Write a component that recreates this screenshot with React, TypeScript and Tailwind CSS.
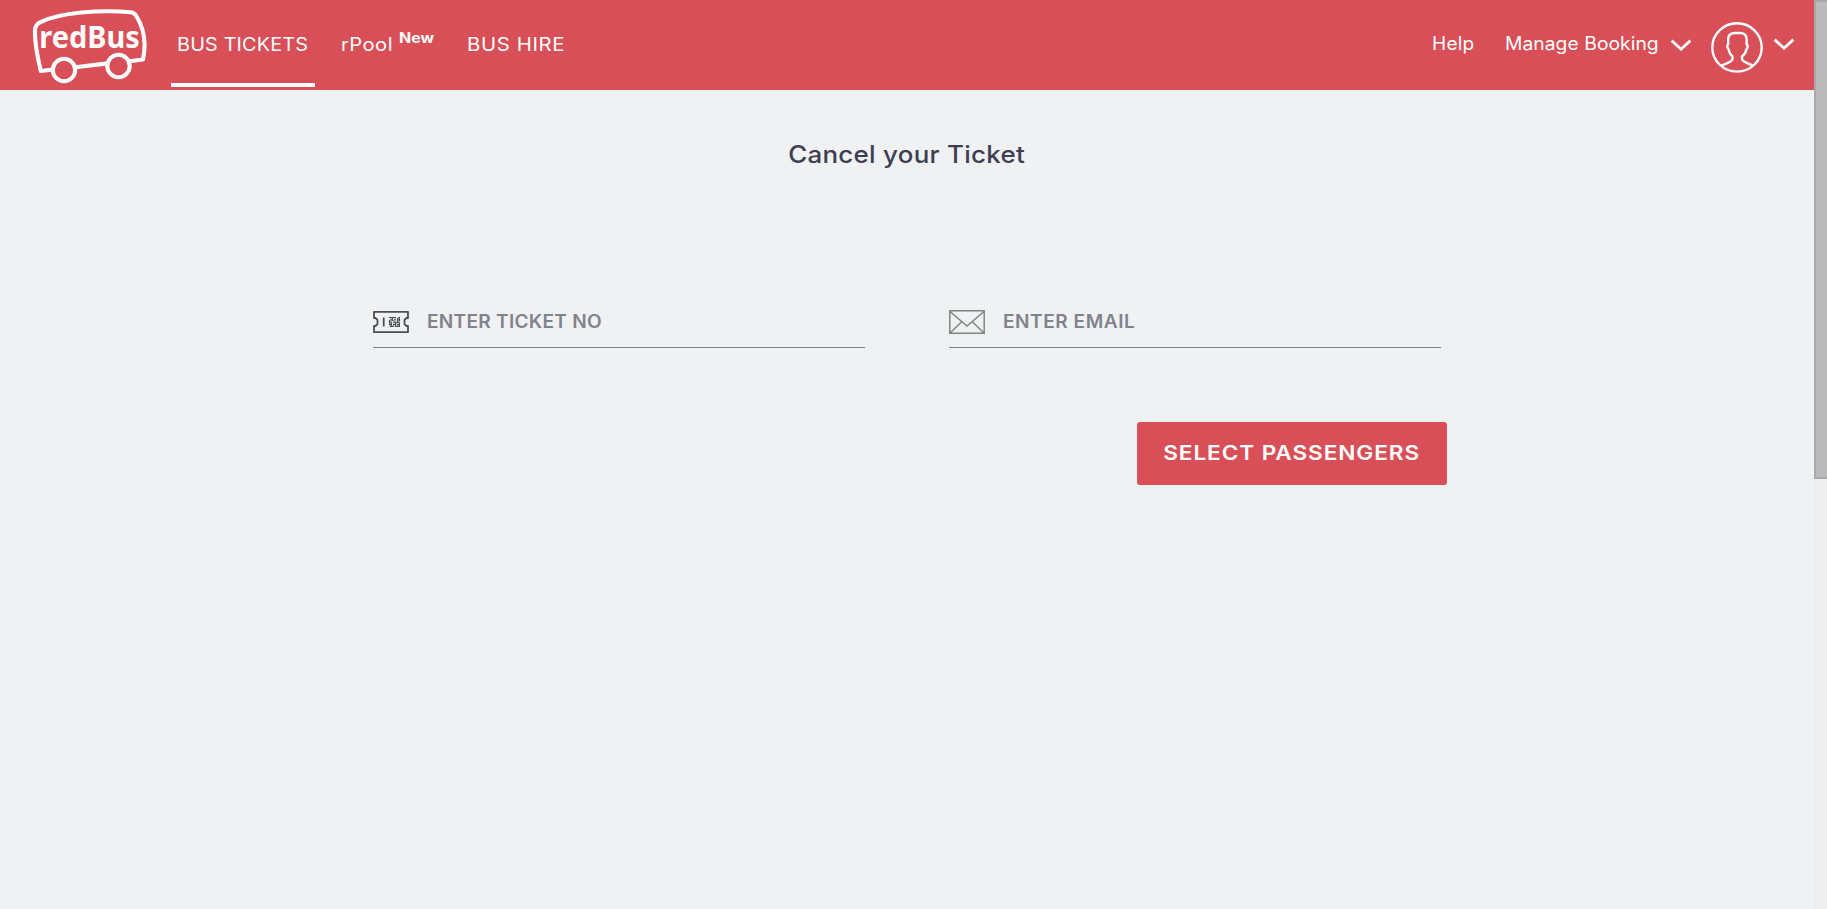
import type { ReactNode } from 'react';

function Logo() {
  return (
    <svg width="120" height="80" viewBox="30 5 120 80" fill="none" stroke="white" strokeWidth="4.1" strokeLinejoin="round" role="img" aria-label="redBus">
      <path d="M53 69.5 40.8 71C37.5 57 34.5 42 35 30Q35.2 25 40 22.3C60 12.5 100 9.5 131 12.3Q134 12.6 136 15.5C144 28 146.5 43 143 59.5L129.5 61.3M75 67.2 108 63.4" />
      <circle cx="64" cy="70" r="11.2" />
      <circle cx="118.5" cy="66" r="11.2" />
      <text x="39.3" y="47.8" textLength="100.5" lengthAdjust="spacingAndGlyphs" fill="white" stroke="none" fontSize="30" fontWeight="700" fontFamily="Noto Sans, sans-serif">redBus</text>
    </svg>
  );
}

function Chevron() {
  return (
    <svg width="22" height="14" viewBox="0 0 22 14" fill="none" stroke="white" strokeWidth="2.8" className="shrink-0">
      <path d="M1.6 1.6 11 10.2 20.4 1.6" />
    </svg>
  );
}

function UserIcon() {
  return (
    <svg width="52" height="52" viewBox="0 0 52 52" fill="none" stroke="white" strokeWidth="2.4" strokeLinejoin="round" className="shrink-0">
      <ellipse cx="26" cy="26.4" rx="24.7" ry="24.2" />
      <path d="M10.5 44.5C15 42.3 21.5 41 21.5 38V35.5C19.3 33.5 18 31 17.6 28.5L16.4 26.5V24.5L17.2 23V18C17.4 13.8 20.5 12 24 12H29C32.5 12 35.4 14 35.6 18V23L36.6 24.5V26.5L35.4 28.5C34.8 31.5 33.3 33.8 31 35.5V38C31 41 37.5 42 41.5 44.5" />
    </svg>
  );
}

function TicketIcon() {
  return (
    <svg width="36" height="24" viewBox="0 0 36 24" fill="none" stroke="#504c58" className="shrink-0">
      <path strokeWidth="1.8" strokeLinejoin="round" d="M1 1.8H35V8H33.5L31.5 10V14L33.5 16H35V22.2H1V16H2.5L4.5 14V10L2.5 8H1Z" />
      <path strokeWidth="1.8" d="M10.7 7.5V16.5" />
      <path strokeWidth="1.1" d="M16 7.5h3m1 0h3m2 0h2M17 9.2h2m2 0h2m1 0h3M16 11h3m1 0h3m2 0h2M17 12.8h2m1 0h2m1 0h4M16 14.6h2m2 0h3m1 0h2M17 16.4h4m2 0h4M16.5 10v4M19.5 7v4M26.5 8v3M22.5 12v5M24.5 8v5M18.5 13v4M26.5 13v3" />
    </svg>
  );
}

function MailIcon() {
  return (
    <svg width="36" height="24" viewBox="0 0 36 24" fill="none" stroke="#85857f" strokeWidth="1.5" className="shrink-0">
      <path d="M.8.8H35.2V23.3H.8ZM1 1.5 18 16 35 1.5M1 23 12.5 12M35 23 23.5 12" />
    </svg>
  );
}

function Field({ icon, label, children }: { icon: ReactNode; label: string; children: ReactNode }) {
  return (
    <label aria-label={label} className="flex h-[46px] w-[492px] items-start border-b border-[#758095] pt-2">
      {icon}
      <span className="ml-[18px] text-[18px] leading-6 font-semibold whitespace-nowrap text-[#82828d]">{children}</span>
    </label>
  );
}

export default function App() {
  return (
    <div className="flex h-[909px] w-full overflow-hidden bg-[#eff1f3] font-['Inter',sans-serif]">
      <div className="flex min-w-0 flex-1 flex-col">
        <header className="flex h-[90px] shrink-0 items-start bg-[#d84f57] text-[18px] leading-7 text-white">
          <div className="ml-[30px] pt-[5px]"><Logo /></div>
          <nav className="ml-[21px] flex">
            <a className="flex h-[87px] w-[144px] justify-center border-b-4 border-white pt-[31px] whitespace-nowrap"><span className="inline-block scale-x-[1.1] tracking-[0.15px]">BUS TICKETS</span></a>
            <a className="ml-[26px] flex w-[126px] pt-[31px] whitespace-nowrap">
              <span className="inline-block w-[58px] origin-left scale-x-[1.12] tracking-[0.4px]">rPool</span>
              <span className="inline-block origin-left -translate-y-[7px] scale-x-[1.1] text-[14.5px] font-bold">New</span>
            </a>
            <a className="inline-block origin-left scale-x-[1.13] pt-[31px] tracking-[0.55px] whitespace-nowrap">BUS HIRE</a>
          </nav>
          <div className="ml-auto flex items-start pr-[19px]">
            <a className="w-[73px] pt-[30px]"><span className="inline-block origin-left scale-x-[1.06] tracking-[0.2px]">Help</span></a>
            <a className="w-[165px] pt-[30px] whitespace-nowrap"><span className="inline-block origin-left scale-x-[1.07] tracking-[0.05px]">Manage Booking</span></a>
            <span className="pt-[39px]"><Chevron /></span>
            <span className="ml-[19px] pt-[21px]"><UserIcon /></span>
            <span className="ml-[10px] pt-[38px]"><Chevron /></span>
          </div>
        </header>
        <main className="flex flex-col items-center">
          <h1 className="mt-[49px] scale-x-[1.08] text-[24px] leading-8 font-medium tracking-[0.25px] text-[#3e3e52]">Cancel your Ticket</h1>
          <div className="mt-[131px] flex w-[1068px] gap-[84px]">
            <Field icon={<TicketIcon />} label="Ticket number"><span className="inline-block origin-left scale-x-[1.06] tracking-[0.25px]">ENTER TICKET NO</span></Field>
            <Field icon={<MailIcon />} label="Email"><span className="inline-block origin-left scale-x-[1.06] tracking-[0.5px]">ENTER EMAIL</span></Field>
          </div>
          <div className="mt-[74px] flex w-[1080px] justify-end">
            <button className="h-[63px] w-[310px] rounded-[3px] bg-[#d84f57] pb-[2px] text-[20px] font-semibold whitespace-nowrap text-white"><span className="inline-block scale-x-[1.13] tracking-[0.8px]">SELECT PASSENGERS</span></button>
          </div>
        </main>
      </div>
      <div className="w-[13px] shrink-0 bg-[#eeeeee]">
        <div className="h-[479px] border-2 border-r-0 border-[#a9a9a9] bg-[#bababa]" />
      </div>
    </div>
  );
}
